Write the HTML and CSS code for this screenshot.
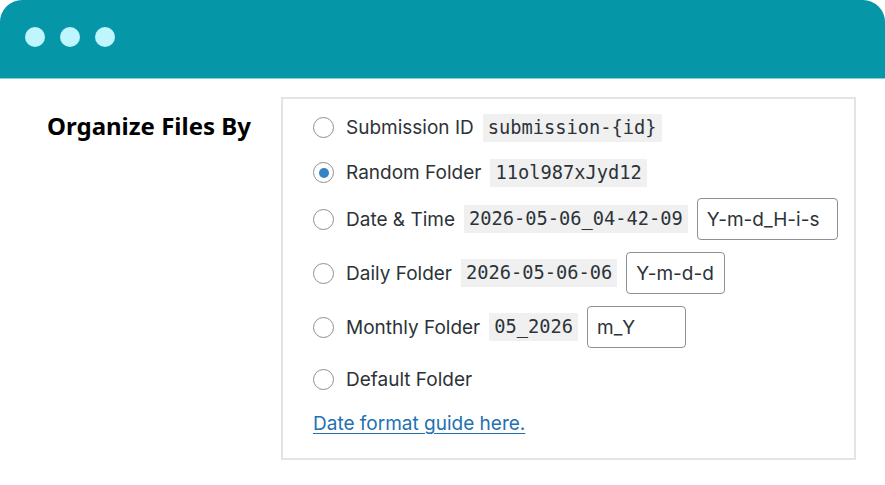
FILE: index.html
```html
<!DOCTYPE html>
<html>
<head>
<meta charset="utf-8">
<link rel="stylesheet" href="styles.css">
</head>
<body>
<div class="window">
  <div class="titlebar">
    <span class="dot"></span><span class="dot"></span><span class="dot"></span>
  </div>
  <div class="content">
    <div class="label">Organize Files By</div>
    <div class="panel">
      <div class="options">
        <label class="opt"><span class="radio"></span><span class="text">Submission ID</span><code>submission-{id}</code></label>
        <label class="opt"><span class="radio checked"></span><span class="text">Random Folder</span><code>11ol987xJyd12</code></label>
        <label class="opt opt-input first-input"><span class="radio"></span><span class="text">Date &amp; Time</span><code>2026-05-06_04-42-09</code><span class="field w141">Y-m-d_H-i-s</span></label>
        <label class="opt opt-input"><span class="radio"></span><span class="text">Daily Folder</span><code>2026-05-06-06</code><span class="field w99">Y-m-d-d</span></label>
        <label class="opt opt-input"><span class="radio"></span><span class="text">Monthly Folder</span><code>05_2026</code><span class="field w99">m_Y</span></label>
        <label class="opt after-input"><span class="radio"></span><span class="text">Default Folder</span></label>
        <a class="guide" href="#">Date format guide here.</a>
      </div>
    </div>
  </div>
</div>
</body>
</html>
```
FILE: styles.css
```css
html, body {
  margin: 0;
  padding: 0;
  background: #ffffff;
}
.window {
  width: 885px;
  height: 485px;
  overflow: hidden;
}
.titlebar {
  height: 79px;
  box-sizing: border-box;
  background: #0596a8;
  border-bottom: 1px solid #7fd0da;
  border-radius: 22px 22px 0 0;
  display: flex;
  align-items: center;
  gap: 15px;
  padding-left: 25px;
  padding-bottom: 5px;
}
.dot {
  width: 20px;
  height: 20px;
  border-radius: 50%;
  background: #bff5fc;
}
.content {
  display: flex;
  align-items: flex-start;
}
.label {
  width: 234px;
  padding-left: 47px;
  padding-top: 30px;
  font-family: "Noto Sans", "Open Sans", sans-serif;
  font-weight: 700;
  font-size: 24px;
  line-height: 33px;
  color: #000;
}
.panel {
  margin-top: 18px;
  width: 575px;
  height: 363px;
  box-sizing: border-box;
  border: 2px solid #e4e4e4;
  padding: 12px 0 0 30px;
}
.options {
  display: flex;
  flex-direction: column;
  gap: 12px;
  font-family: Inter, "Noto Sans", sans-serif;
  font-size: 19px;
  color: #2c3338;
}
.opt {
  display: flex;
  align-items: center;
  height: 33px;
  white-space: nowrap;
}
.opt-input {
  height: 42px;
}
.first-input {
  margin-top: -3px;
}
.after-input {
  margin-top: 3px;
}
.radio {
  width: 19px;
  height: 19px;
  border: 1.5px solid #8c8f94;
  border-radius: 50%;
  margin-right: 12px;
  position: relative;
  flex: none;
}
.radio.checked::after {
  content: "";
  position: absolute;
  left: 4.5px;
  top: 4.5px;
  width: 10px;
  height: 10px;
  border-radius: 50%;
  background: #3582c4;
}
.text {
  margin-right: 9px;
}
code {
  font-family: "DejaVu Sans Mono", monospace;
  font-size: 18.7px;
  background: #f0f0f1;
  padding: 3px 5px;
  line-height: 22px;
  color: #2c3338;
}
.field {
  margin-left: 9px;
  height: 42px;
  box-sizing: border-box;
  border: 1px solid #8c8f94;
  border-radius: 4px;
  padding: 0 9px;
  display: flex;
  align-items: center;
  font-size: 19px;
  white-space: nowrap;
  flex: none;
}
.w99 {
  width: 99px;
}
.w141 {
  width: 141px;
}
.guide {
  margin-top: 4px;
  color: #2271b1;
  text-decoration: underline;
  text-underline-offset: 3px;
  font-size: 19px;
  line-height: 24px;
}
```
